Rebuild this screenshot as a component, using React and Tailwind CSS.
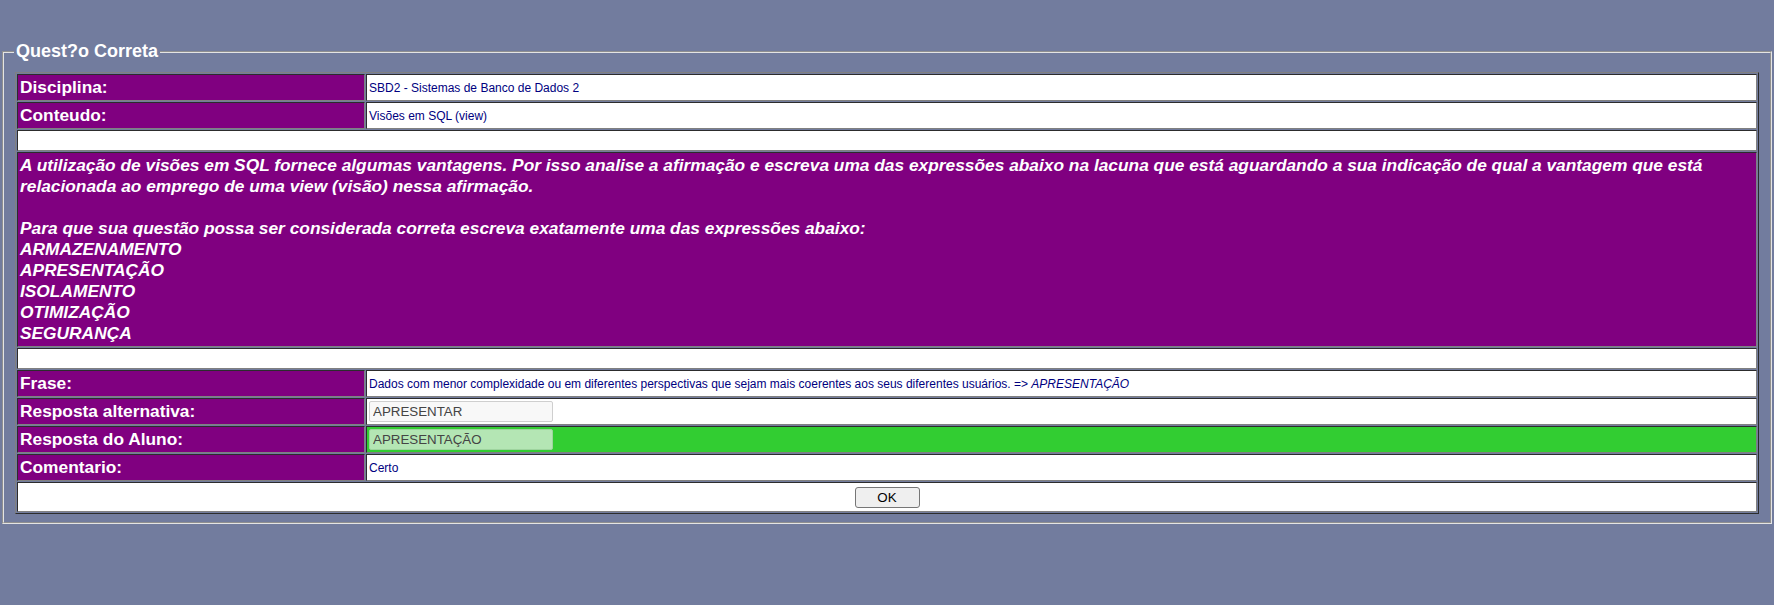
import React from 'react';

const labelCell =
  'w-[348px] bg-[#800080] text-white font-bold text-[17.33px] leading-[21px] px-[2px] py-[2px] border border-[#808080] [border-style:inset] align-middle';
const valueCell =
  'bg-white text-[#000080] text-[12px] leading-[14px] px-[2px] py-[2px] border border-[#808080] [border-style:inset] align-middle';
const blankCell = 'bg-white h-[21px] p-0 border border-[#808080] [border-style:inset]';

const Row = ({ label, children, className = valueCell }) => (
  <tr className="h-[27px]">
    <td className={labelCell}>{label}</td>
    <td className={className}>{children}</td>
  </tr>
);

const options = ['ARMAZENAMENTO', 'APRESENTAÇÃO', 'ISOLAMENTO', 'OTIMIZAÇÃO', 'SEGURANÇA'];

export default function App() {
  return (
    <div className="min-h-[605px] bg-[#727c9e] pt-[41px] font-['Liberation_Sans',Arial,sans-serif]">
      <fieldset className="mx-[2px] border-2 border-[#e4e4e4] [border-style:groove] px-[11px] pt-[10px] pb-[8px]">
        <legend className="px-[2px] -ml-[1px] text-white font-bold text-[18px] leading-[21px]">
          Quest?o Correta
        </legend>

        <table className="w-full border-separate border-spacing-[1px] border border-[#808080] [border-style:outset]">
          <tbody>
            <Row label="Disciplina:">SBD2 - Sistemas de Banco de Dados 2</Row>
            <Row label="Conteudo:">Visões em SQL (view)</Row>
            <tr>
              <td colSpan={2} className={blankCell}></td>
            </tr>
            <tr>
              <td
                colSpan={2}
                className="bg-[#800080] text-white font-bold italic text-[17.33px] leading-[21px] px-[2px] py-[2px] border border-[#808080] [border-style:inset]"
              >
                A utilização de visões em SQL fornece algumas vantagens. Por isso analise a afirmação e escreva uma das
                expressões abaixo na lacuna que está aguardando a sua indicação de qual a vantagem que está
                <br />
                relacionada ao emprego de uma view (visão) nessa afirmação.
                <br />
                <br />
                Para que sua questão possa ser considerada correta escreva exatamente uma das expressões abaixo:
                {options.map((o) => (
                  <React.Fragment key={o}>
                    <br />
                    {o}
                  </React.Fragment>
                ))}
              </td>
            </tr>
            <tr>
              <td colSpan={2} className={blankCell}></td>
            </tr>
            <Row label="Frase:">
              Dados com menor complexidade ou em diferentes perspectivas que sejam mais coerentes aos seus diferentes
              usuários. =&gt; <i>APRESENTAÇÃO</i>
            </Row>
            <Row label="Resposta alternativa:">
              <input
                readOnly
                value="APRESENTAR"
                className="block w-[184px] h-[21px] bg-[#f8f8f8] border border-[#cfcfcf] rounded-[2px] px-[3px] text-[13.33px] text-[#444] outline-none font-['Liberation_Sans',Arial,sans-serif]"
              />
            </Row>
            <Row
              label="Resposta do Aluno:"
              className="bg-[#32cd32] px-[2px] py-[2px] border border-[#808080] [border-style:inset] align-middle"
            >
              <input
                readOnly
                value="APRESENTAÇÃO"
                className="block w-[184px] h-[21px] bg-[#b4e6b4] border border-[#9ed49e] rounded-[2px] px-[3px] text-[13.33px] text-[#444] outline-none font-['Liberation_Sans',Arial,sans-serif]"
              />
            </Row>
            <Row label="Comentario:">Certo</Row>
            <tr className="h-[27px]">
              <td colSpan={2} className="bg-white text-center px-[2px] py-[2px] border border-[#808080] [border-style:inset]">
                <button className="w-[65px] h-[21px] bg-[#efefef] border border-[#767676] rounded-[3px] text-[13.33px] text-black leading-none font-['Liberation_Sans',Arial,sans-serif]">
                  OK
                </button>
              </td>
            </tr>
          </tbody>
        </table>
      </fieldset>
    </div>
  );
}
